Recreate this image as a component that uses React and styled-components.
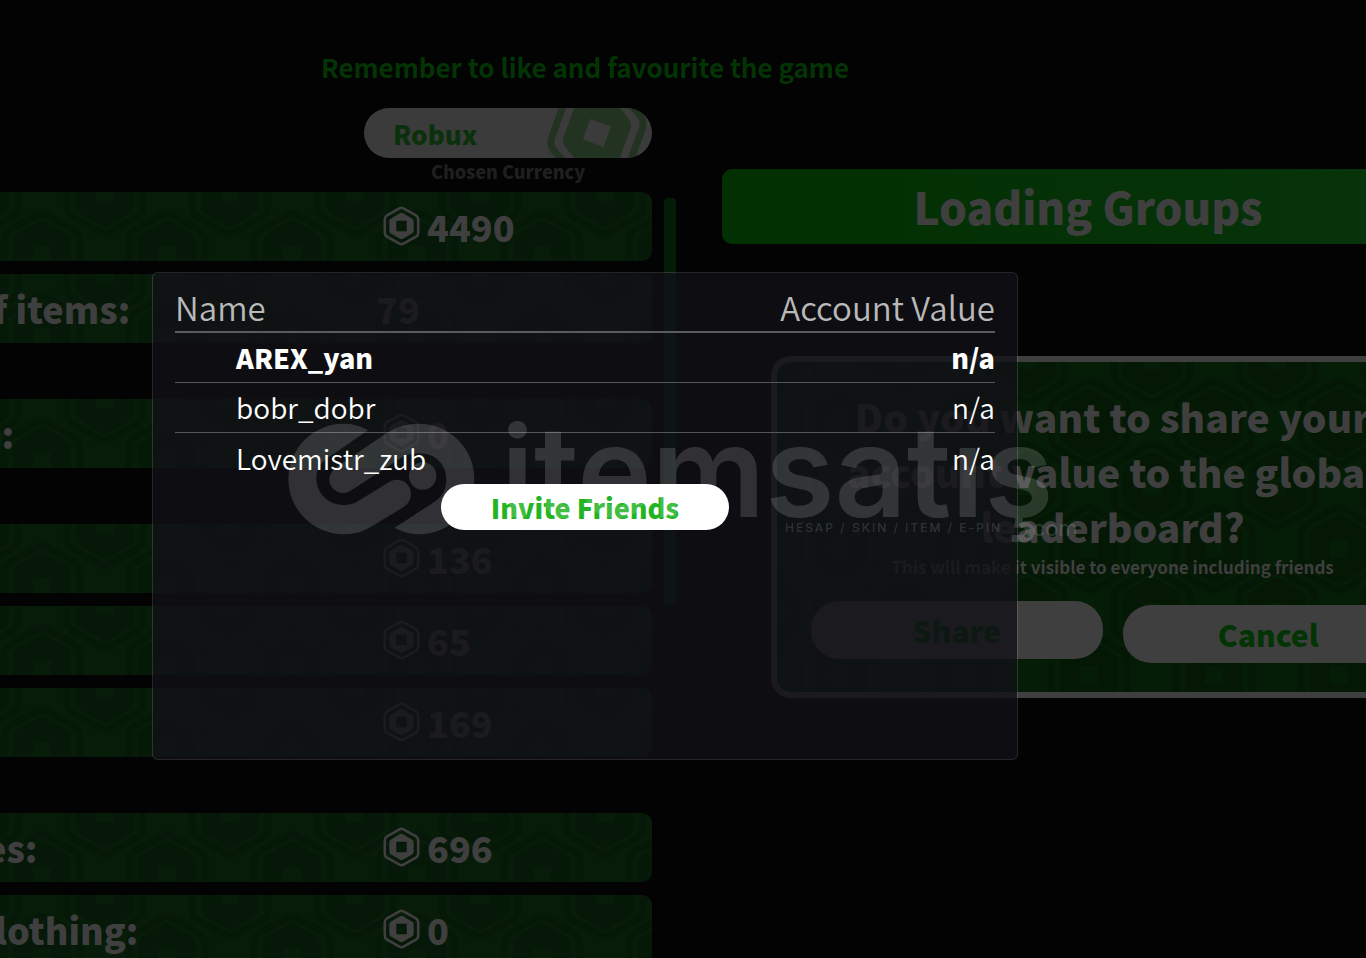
import { useState } from 'react';
// css
import styled, { createGlobalStyle } from 'styled-components';

const stats = [
  { label: '', value: '4490', coin: true },
  { label: 'f items:', value: '79', cut: 7 },
  { label: 'e:', value: '0', coin: true, spaced: true, cut: 20 },
  { label: '', value: '136', coin: true, spaced: true },
  { label: '', value: '65', coin: true },
  { label: '', value: '169', coin: true },
  { label: 'es:', value: '696', coin: true, spaced: true, cut: 15 },
  { label: 'lothing:', value: '0', coin: true, cut: 5 },
];

const players = [
  { name: 'AREX_yan', value: 'n/a', me: true },
  { name: 'bobr_dobr', value: 'n/a' },
  { name: 'Lovemistr_zub', value: 'n/a' },
];

// honeycomb tile, one coin in the middle and one split over the corners
const tile = (dark) => {
  const coin = (x, y) => `<g transform='translate(${x} ${y})' stroke-linejoin='round' stroke='${dark}'>
    <path d='M-5-40Q0-43 5-40L32-25Q38-21 38-15V15Q38 21 32 25L5 40Q0 43-5 40L-32 25Q-38 21-38 15V-15Q-38-21-32-25Z' fill='none' stroke-width='7'/>
    <path fill-rule='evenodd' stroke='none' d='M-5-33Q0-36 5-33L24-22Q29-19 29-13V13Q29 19 24 22L5 33Q0 36-5 33L-24 22Q-29 19-29 13V-13Q-29-19-24-22ZM-9-9V9H9V-9Z' fill='${dark}'/>
  </g>`;
  const svg = `<svg xmlns='http://www.w3.org/2000/svg' width='125' height='126'>
    ${coin(0, 0)}${coin(125, 0)}${coin(0, 126)}${coin(125, 126)}${coin(62, 63)}</svg>`;
  return `url("data:image/svg+xml,${encodeURIComponent(svg).replace(/'/g, '%27')}")`;
};

const Coin = () => (
  <CoinIcon viewBox="0 0 37 40" aria-hidden="true">
    <path d="M16.500 2.300Q18.500 1.200 20.500 2.300L33 9.300Q35.200 10.600 35.200 13.300V26.700Q35.200 29.400 33 30.700L20.500 37.700Q18.500 38.800 16.500 37.700L4 30.700Q1.800 29.400 1.800 26.700V13.300Q1.800 10.600 4 9.300Z" fill="none" stroke="currentColor" strokeWidth="2.600" />
    <path fillRule="evenodd" fill="currentColor" d="M17 7.300Q18.500 6.400 20 7.300L29 12.500Q30.700 13.500 30.700 15.400V24.600Q30.700 26.500 29 27.500L20 32.700Q18.500 33.600 17 32.700L8 27.500Q6.300 26.500 6.300 24.600V15.400Q6.300 13.500 8 12.500ZM13.300 14.800V25.200H23.700V14.800Z" />
  </CoinIcon>
);

const Watermark = () => (
  <StyledWatermark>
    <svg className="logo" viewBox="38 40 561 336" aria-hidden="true">
      <path d="M278 62C252 47 228 42 205 42A166 166 0 0 0 205 374C240 374 265 365 290 350L385 292C405 278 410 258 405 240C397 212 367 203 343 216L250 273C236 282 222 286 205 286A80 80 0 0 1 123 208C123 178 135 160 160 143Z" />
      <path d="M358 354C385 368 410 374 431 374A166 166 0 0 0 431 42C395 42 370 50 340 66L184 172C160 190 155 215 172 236C186 252 208 254 226 243L372 148C395 133 415 131 432 131C480 131 513 165 513 208C513 240 500 260 480 275Z" />
      <circle cx="442" cy="199" r="41" />
    </svg>
    <div className="words">
      <div className="brand">itemsatış</div>
      <div className="tagline">
        <span>HESAP / SKIN / ITEM / E-PIN</span>
        <span className="domain">.com</span>
      </div>
    </div>
  </StyledWatermark>
);

export default function App() {
  const [ currency ] = useState('Robux');

  return (
    <Page>
      <GlobalStyle />
      <Banner>Remember to like and favourite the game</Banner>
      <Columns>
        <Left>
          <Currency>
            <CurrencyButton type="button">
              {currency}
              <svg viewBox="0 0 106 50" aria-hidden="true">
                <g transform="translate(51 25) rotate(20)">
                  <path d="M-5-48Q0-51 5-48L35-31Q41-27 41-19V19Q41 27 35 31L5 48Q0 51-5 48L-35 31Q-41 27-41 19V-19Q-41-27-35-31Z" fill="none" stroke="#223322" strokeWidth="7" />
                  <path fillRule="evenodd" d="M-5-36Q0-39 5-36L25-24Q30-21 30-15V15Q30 21 25 24L5 36Q0 39-5 36L-25 24Q-30 21-30 15V-15Q-30-21-25-24ZM-11-11V11H11V-11Z" fill="#223322" />
                </g>
              </svg>
            </CurrencyButton>
            <p>Chosen Currency</p>
          </Currency>
          <ListWrapper>
            <List>
              {stats.map((s, i) => (
                <Stat key={i} $spaced={s.spaced}>
                  <StatLabel $cut={s.cut}>{s.label}</StatLabel>
                  <StatValue $coin={s.coin}>
                    {s.coin && <Coin />}
                    {s.value}
                  </StatValue>
                </Stat>
              ))}
            </List>
            <ScrollThumb />
          </ListWrapper>
        </Left>
        <Right>
          <Loading>Loading Groups</Loading>
          <ShareBox>
            <h2>Do you want to share your account value to the global leaderboard?</h2>
            <p>This will make it visible to everyone including friends</p>
            <Choices>
              <Choice type="button">Share</Choice>
              <Choice type="button" $low>Cancel</Choice>
            </Choices>
          </ShareBox>
        </Right>
      </Columns>
      <Overlay>
        <Modal>
          <Table>
            <thead>
              <tr>
                <th>Name</th>
                <th>Account Value</th>
              </tr>
            </thead>
            <tbody>
              {players.map((p) => (
                <Player key={p.name} $me={p.me}>
                  <td>{p.name}</td>
                  <td>{p.value}</td>
                </Player>
              ))}
            </tbody>
          </Table>
          <Invite type="button">Invite Friends</Invite>
        </Modal>
      </Overlay>
      <Watermark />
    </Page>
  );
}

const GlobalStyle = createGlobalStyle`
  * {
    box-sizing: border-box;
    margin: 0;
  }
  body {
    background: #030303;
    font-family: "Noto Sans CJK SC", "Noto Sans", sans-serif;
  }
  h2 {
    font-weight: inherit;
  }
  button {
    border: none;
    font-family: inherit;
    font-weight: 900;
    cursor: pointer;
  }
`;

const Page = styled.main`
  position: relative;
  height: 100vh;
  overflow: hidden;
  color: #403f40;
  font-weight: 900;
`;

const Banner = styled.h1`
  padding: 48px 196px 0 0;
  text-align: center;
  font-size: 26px;
  font-weight: 700;
  line-height: 38px;
  color: #033404;
`;

const Columns = styled.div`
  display: grid;
  grid-template-columns: 676fr 690fr;
`;

const Left = styled.section`
  display: flex;
  flex-direction: column;
  padding-top: 22px;
`;

const Currency = styled.div`
  align-self: flex-end;
  width: 288px;
  margin-right: 24px;
  text-align: center;
  p {
    height: 34px;
    font-size: 18px;
    line-height: 26px;
    color: #1f1f1f;
  }
`;

const CurrencyButton = styled.button`
  display: flex;
  align-items: center;
  justify-content: space-between;
  width: 100%;
  height: 50px;
  padding: 0 0 0 29px;
  border-radius: 25px;
  overflow: hidden;
  background: #3b3b3b;
  color: #0a310b;
  font-size: 26px;
  svg {
    width: 106px;
    height: 50px;
  }
`;

const ListWrapper = styled.div`
  display: flex;
  gap: 12px;
`;

const List = styled.div`
  flex: 1;
`;

const Stat = styled.div`
  display: grid;
  grid-template-columns: 376fr 276fr;
  align-items: center;
  height: 69px;
  margin-top: ${({$spaced}) => $spaced ? '56px' : '13px'};
  padding-bottom: 2px;
  border-radius: 0 10px 10px 0;
  background: #071c09 ${tile('#061807')} -20px 0;
  font-size: 36px;
  line-height: 54px;
  white-space: nowrap;
  &:first-child {
    margin-top: 0;
  }
`;

// labels run out of the left side of the window
const StatLabel = styled.span`
  text-indent: -${({$cut}) => $cut || 0}px;
`;

const StatValue = styled.span`
  display: flex;
  align-items: center;
  gap: 7px;
  padding-left: ${({$coin}) => $coin ? '7px' : '0'};
`;

const CoinIcon = styled.svg`
  width: 37px;
  height: 40px;
`;

const ScrollThumb = styled.div`
  width: 12px;
  height: 407px;
  margin-top: 6px;
  border-radius: 4px;
  background: #031c05;
`;

const Right = styled.section`
  margin-right: -88px;
  padding: 83px 0 0 46px;
`;

const Loading = styled.div`
  height: 75px;
  border-radius: 10px;
  background: linear-gradient(90deg, #033003 20%, #08330c);
  text-align: center;
  font-size: 44px;
  line-height: 75px;
`;

const ShareBox = styled.div`
  margin: 112px 0 0 49px;
  padding: 27px 34px 29px;
  border: 6px solid #403f40;
  border-radius: 20px;
  background: #051d06 ${tile('#041805')} 0 -2px;
  text-align: center;
  h2 {
    font-size: 39px;
    line-height: 55px;
  }
  p {
    font-size: 17px;
    font-weight: 700;
    line-height: 26px;
  }
`;

const Choices = styled.div`
  display: flex;
  gap: 20px;
  height: 62px;
  margin-top: 21px;
`;

const Choice = styled.button`
  flex: 1;
  align-self: ${({$low}) => $low ? 'flex-end' : 'flex-start'};
  height: 58px;
  border-radius: 28px;
  background: #403f40;
  color: #033404;
  font-size: 30px;
  line-height: 56px;
`;

const Overlay = styled.div`
  position: absolute;
  inset: 0 196px 0 0;
  display: flex;
  justify-content: center;
  align-items: flex-start;
  padding-top: 272px;
`;

const Modal = styled.div`
  display: flex;
  flex-direction: column;
  gap: 1px;
  width: 74%;
  height: 488px;
  padding: 10px 22px;
  border: 1px solid rgba(255, 255, 255, .14);
  border-radius: 6px;
  background: rgba(18, 17, 23, .8);
  background-clip: padding-box;
`;

const Table = styled.table`
  width: 100%;
  border-spacing: 0;
  color: #fff;
  th {
    height: 50px;
    padding: 0;
    border-bottom: 2px solid #5b5c5f;
    color: #b9b9ba;
    font-size: 33px;
    font-weight: 350;
    line-height: 48px;
    text-align: left;
  }
  th:last-child, td:last-child {
    text-align: right;
  }
`;

const Player = styled.tr`
  td {
    height: 50px;
    padding: 0;
    border-bottom: 1px solid #55565a;
    font-size: ${({$me}) => $me ? 27 : 28}px;
    font-weight: ${({$me}) => $me ? 900 : 350};
    line-height: 49px;
  }
  td:first-child {
    padding-left: 61px;
  }
  &:last-child td {
    border-bottom: none;
  }
`;

const Invite = styled.button`
  align-self: center;
  width: 288px;
  height: 46px;
  border-radius: 23px;
  background: #fff;
  color: #22b422;
  font-size: 27px;
  line-height: 46px;
`;

const StyledWatermark = styled.div`
  position: absolute;
  top: 423px;
  left: 288px;
  display: flex;
  gap: 26px;
  pointer-events: none;
  color: rgba(255, 255, 255, .15);
  white-space: nowrap;
  .logo {
    width: 187px;
    height: 112px;
    fill: currentColor;
  }
  .brand {
    height: 97px;
    font-family: Inter, sans-serif;
    font-size: 126px;
    font-weight: 600;
    line-height: 96px;
  }
  .tagline {
    display: flex;
    align-items: center;
    gap: 24px;
    padding-left: 284px;
    font-family: Inter, sans-serif;
    font-size: 12px;
    font-weight: 500;
    line-height: 16px;
    letter-spacing: 2px;
  }
  .domain {
    font-size: 22px;
    font-weight: 400;
    line-height: 12px;
    letter-spacing: normal;
  }
`;
